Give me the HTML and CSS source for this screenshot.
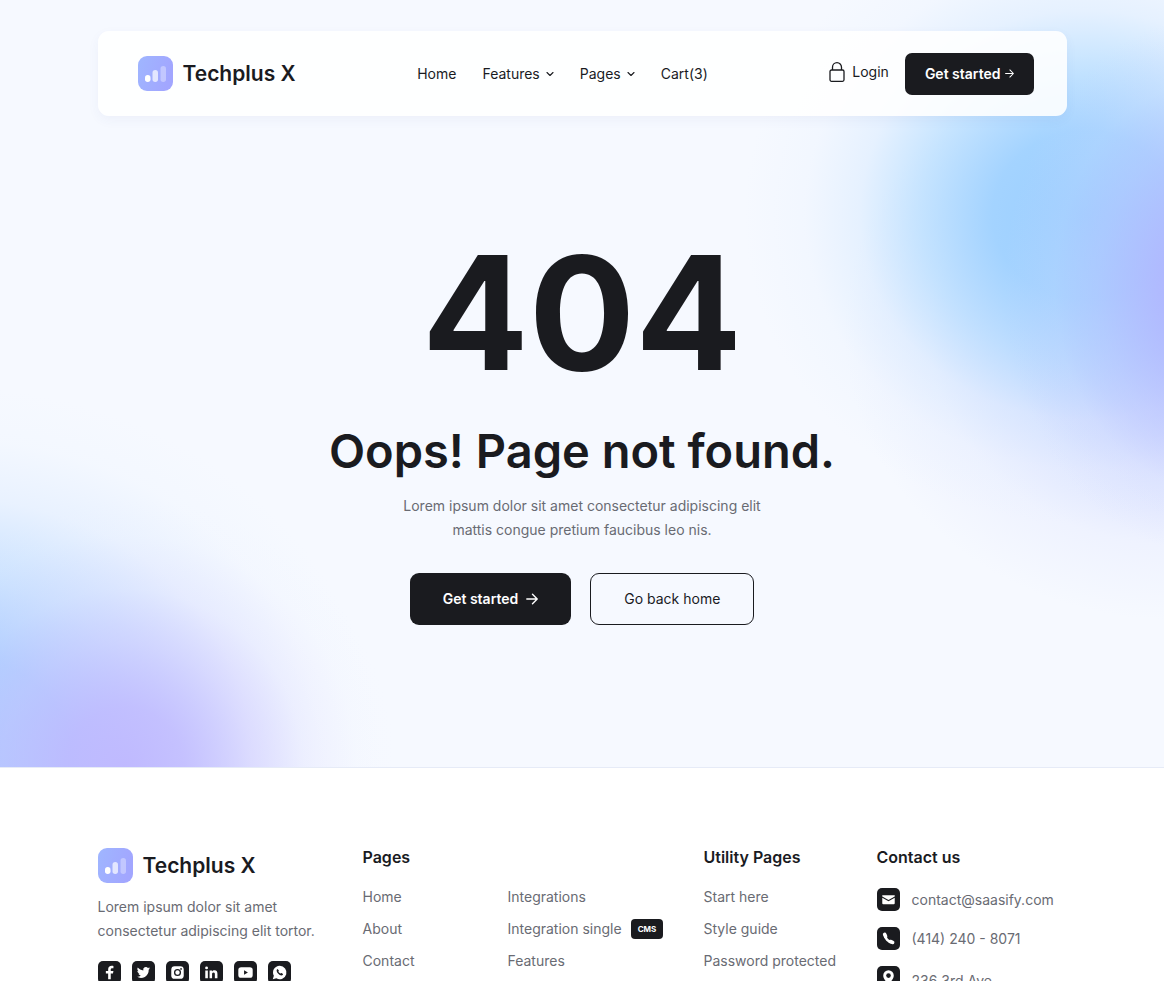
FILE: index.html
```
<!DOCTYPE html>
<html lang="en">
<head>
<meta charset="utf-8">
<meta name="viewport" content="width=device-width, initial-scale=1">
<title>Page not found – Techplus X</title>
<link rel="stylesheet" href="styles.css">
</head>
<body>
<svg class="sprite" aria-hidden="true">
  <defs>
    <linearGradient id="logo-fill" x1="0" y1="0" x2="1" y2="0.3">
      <stop offset="0" stop-color="#9fb6ff"/>
      <stop offset="1" stop-color="#a2a6ff"/>
    </linearGradient>
    <symbol id="logo" viewBox="0 0 35 35">
      <rect width="35" height="35" rx="9" fill="url(#logo-fill)"/>
      <rect x="7" y="19" width="5.500" height="7" rx="2.700" fill="#fff"/>
      <rect x="14.500" y="14" width="5.500" height="12" rx="2.700" fill="#fff" opacity=".7"/>
      <rect x="22.500" y="10" width="5.500" height="16" rx="2.700" fill="#fff" opacity=".35"/>
    </symbol>
    <symbol id="chevron" viewBox="0 0 8 8"><path d="M1 2.500l3 3 3-3" fill="none" stroke="currentColor" stroke-width="1.100" stroke-linecap="round" stroke-linejoin="round"/></symbol>
    <symbol id="arrow" viewBox="0 0 12 12"><path d="M.8 6h10.200M6.500 1.300L11.200 6l-4.700 4.700" fill="none" stroke="currentColor" stroke-width="1.400" stroke-linecap="round" stroke-linejoin="round"/></symbol>
  </defs>
</svg>

<div class="hero">
  <header class="header wrap">
    <a class="brand" href="#"><svg class="brand-mark" aria-hidden="true"><use href="#logo"/></svg>Techplus X</a>
    <nav class="nav" aria-label="Main">
      <a href="#">Home</a>
      <a href="#">Features<svg class="chevron" aria-hidden="true"><use href="#chevron"/></svg></a>
      <a href="#">Pages<svg class="chevron" aria-hidden="true"><use href="#chevron"/></svg></a>
      <a href="#">Cart(3)</a>
    </nav>
    <div class="actions">
      <a class="login" href="#">
        <svg class="lock" viewBox="0 0 16 20" fill="none" stroke="currentColor" stroke-width="1.300" aria-hidden="true"><rect x="1" y="8" width="14" height="11.300" rx="1.500"/><path d="M3.500 8V5.200a4.500 4.500 0 0 1 9 0V8"/></svg>
        Login
      </a>
      <a class="button button-dark button-small" href="#">Get started<svg class="arrow-small" aria-hidden="true"><use href="#arrow"/></svg></a>
    </div>
  </header>

  <main class="message wrap">
    <p class="code">404</p>
    <h1 class="title">Oops! Page not found.</h1>
    <p class="lead">Lorem ipsum dolor sit amet consectetur adipiscing elit mattis congue pretium faucibus leo nis.</p>
    <div class="buttons">
      <a class="button button-dark" href="#">Get started<svg class="arrow" aria-hidden="true"><use href="#arrow"/></svg></a>
      <a class="button button-outline" href="#">Go back home</a>
    </div>
  </main>
</div>

<footer class="footer">
  <div class="footer-grid wrap">
    <section class="about">
      <a class="brand" href="#"><svg class="brand-mark" aria-hidden="true"><use href="#logo"/></svg>Techplus X</a>
      <p class="about-text">Lorem ipsum dolor sit amet consectetur adipiscing elit tortor.</p>
      <div class="social">
        <a class="tile" href="#" aria-label="Facebook"><svg viewBox="0 0 24 24" aria-hidden="true"><path d="M13.300 19v-6h2.300l.5-2.600h-2.800V9c0-.9.4-1.500 1.500-1.500h1.300V5.200C15.700 5.100 15 5 14.300 5c-2.200 0-3.700 1.300-3.700 3.700v1.700H8.200V13h2.400v6z" fill="#fff"/></svg></a>
        <a class="tile" href="#" aria-label="Twitter"><svg viewBox="0 0 24 24" aria-hidden="true"><path d="M18.800 7.600c-.5.2-1 .4-1.600.5.600-.4 1-.9 1.200-1.600-.5.300-1.100.6-1.800.7a2.800 2.800 0 0 0-4.800 2.600C9.400 9.700 7.400 8.500 6 6.900c-.8 1.300-.4 2.900.8 3.700-.4 0-.9-.1-1.200-.3 0 1.300.9 2.500 2.200 2.800-.4.100-.8.100-1.200 0 .4 1.200 1.400 1.900 2.600 2A5.700 5.700 0 0 1 5 16.300a8 8 0 0 0 12.400-7.100c.6-.4 1-.9 1.400-1.600z" fill="#fff"/></svg></a>
        <a class="tile" href="#" aria-label="Instagram"><svg viewBox="0 0 24 24" aria-hidden="true"><rect x="5.500" y="5.500" width="13" height="13" rx="3.500" fill="#fff"/><circle cx="12" cy="12" r="3" fill="none" stroke="#1a1b1f" stroke-width="1.400"/><circle cx="15.700" cy="8.300" r=".9" fill="#1a1b1f"/></svg></a>
        <a class="tile" href="#" aria-label="LinkedIn"><svg viewBox="0 0 24 24" aria-hidden="true"><path d="M5.500 9.800h2.700V18H5.500zM10 9.800h2.600v1.100c.5-.8 1.300-1.300 2.500-1.300 2.500 0 3.100 1.600 3.100 3.900V18h-2.700v-4c0-1.100-.2-2.100-1.400-2.100-1.300 0-1.500 1-1.500 2.100v4H10z" fill="#fff"/><circle cx="6.850" cy="7.200" r="1.500" fill="#fff"/></svg></a>
        <a class="tile" href="#" aria-label="YouTube"><svg viewBox="0 0 24 24" aria-hidden="true"><rect x="4.500" y="6.500" width="15" height="11" rx="3" fill="#fff"/><path d="M10.500 9.600l4 2.400-4 2.400z" fill="#1a1b1f"/></svg></a>
        <a class="tile" href="#" aria-label="WhatsApp"><svg viewBox="0 0 24 24" aria-hidden="true"><path d="M12.200 5a7 7 0 0 0-6.100 10.400L5 19l3.700-1A7 7 0 1 0 12.200 5z" fill="#fff"/><path d="M10 8.300c-1.600.6-1.200 2.900.5 4.800s4.100 2.700 5 1.200c.3-.6.200-.9-.2-1.100l-1.200-.6c-.3-.2-.6 0-.9.500-.9-.3-2-1.200-2.400-2.200.5-.4.600-.7.500-1z" fill="#1a1b1f"/></svg></a>
      </div>
    </section>

    <section>
      <h2 class="footer-title">Pages</h2>
      <div class="page-links">
        <ul class="links">
          <li><a href="#">Home</a></li>
          <li><a href="#">About</a></li>
          <li><a href="#">Contact</a></li>
        </ul>
        <ul class="links">
          <li><a href="#">Integrations</a></li>
          <li><a href="#">Integration single</a><span class="tag">CMS</span></li>
          <li><a href="#">Features</a></li>
        </ul>
      </div>
    </section>

    <section>
      <h2 class="footer-title">Utility Pages</h2>
      <ul class="links">
        <li><a href="#">Start here</a></li>
        <li><a href="#">Style guide</a></li>
        <li><a href="#">Password protected</a></li>
      </ul>
    </section>

    <section>
      <h2 class="footer-title">Contact us</h2>
      <ul class="contacts">
        <li><span class="tile"><svg viewBox="0 0 24 24" aria-hidden="true"><path d="M5.500 7.500h13v1.300L12 12.600 5.500 8.800z" fill="#fff"/><path d="M5.500 10.200l6.500 3.700 6.500-3.700V16a1 1 0 0 1-1 1h-11a1 1 0 0 1-1-1z" fill="#fff"/></svg></span><a href="#">contact@saasify.com</a></li>
        <li><span class="tile"><svg viewBox="0 0 24 24" aria-hidden="true"><path d="M8.200 7.700c.2 4.300 3.600 8 8 8.600" fill="none" stroke="#fff" stroke-width="2.600" stroke-linecap="round"/><path d="M8 7.700l.9 2.100M14 15.200l2.300.9" fill="none" stroke="#fff" stroke-width="3.800" stroke-linecap="round"/></svg></span><a href="#">(414) 240 - 8071</a></li>
        <li class="address"><span class="tile"><svg viewBox="0 0 24 24" aria-hidden="true"><path d="M12 4.500a5.500 5.500 0 0 0-5.500 5.500c0 3.600 3.200 6.500 5.500 9 2.300-2.500 5.500-5.400 5.500-9A5.500 5.500 0 0 0 12 4.500z" fill="#fff"/><circle cx="12" cy="10" r="2.400" fill="#1a1b1f"/></svg></span><span class="address-text">236 3rd Ave</span></li>
      </ul>
    </section>
  </div>
</footer>
</body>
</html>
```
FILE: styles.css
```
* {
  box-sizing: border-box;
}

body {
  margin: 0;
  background: #fff;
  color: #1a1b1f;
  font-family: Inter, "Liberation Sans", sans-serif;
  font-size: 14px;
  line-height: 24px;
}

a {
  color: inherit;
  text-decoration: none;
}

h1, h2, p, ul {
  margin: 0;
  padding: 0;
}

ul {
  list-style: none;
}

svg {
  display: block;
  flex: none;
}

.sprite {
  position: absolute;
  width: 0;
  height: 0;
}

.wrap {
  width: calc(100% - 195px);
  max-width: 1200px;
  margin: 0 auto;
}

/* Hero */

.hero {
  padding: 31px 0 142px;
  border-bottom: 1px solid #e6ebf7;
  background:
    radial-gradient(ellipse 270px 270px at 125px 100%, rgba(192, 182, 255, .9) 0%, rgba(194, 184, 255, .8) 22%, rgba(206, 196, 255, .5) 46%, rgba(222, 216, 255, .25) 66%, rgba(238, 238, 255, .08) 86%, rgba(240, 244, 255, 0) 100%),
    radial-gradient(ellipse 430px 370px at -50px calc(100% - 10px), #a0c4ff 0%, rgba(160, 202, 255, .95) 28%, rgba(175, 212, 255, .65) 48%, rgba(208, 228, 255, .35) 70%, rgba(228, 240, 255, .14) 86%, rgba(235, 245, 255, 0) 100%),
    radial-gradient(ellipse 210px 270px at calc(100% + 50px) 285px, #b2b0ff 0%, rgba(178, 182, 255, .85) 25%, rgba(188, 194, 255, .45) 55%, rgba(208, 214, 255, .2) 76%, rgba(235, 240, 255, 0) 100%),
    radial-gradient(ellipse 340px 310px at calc(100% - 80px) 215px, rgba(154, 206, 255, 1) 0%, rgba(158, 209, 255, .93) 27%, rgba(172, 217, 255, .65) 48%, rgba(205, 229, 255, .4) 66%, rgba(225, 238, 255, .2) 82%, rgba(240, 247, 255, 0) 100%),
    radial-gradient(ellipse 330px 290px at calc(100% + 10px) 330px, rgba(184, 192, 255, 1) 0%, rgba(190, 200, 255, .85) 30%, rgba(205, 214, 255, .55) 52%, rgba(220, 226, 255, .28) 74%, rgba(235, 240, 255, 0) 100%),
    #f6f9ff;
}

.header {
  display: flex;
  align-items: center;
  justify-content: space-between;
  min-height: 85px;
  padding: 20px 32px 20px 40px;
  border-radius: 11px;
  background: rgba(255, 255, 255, .88);
  box-shadow: 0 4px 12px rgba(60, 80, 160, .05);
}

.brand {
  display: flex;
  align-items: center;
  gap: 10px;
  font-size: 21px;
  font-weight: 600;
}

.brand-mark {
  width: 35px;
  height: 35px;
}

.nav {
  display: flex;
  gap: 26px;
}

.nav a {
  display: flex;
  align-items: center;
  gap: 6px;
}

.chevron {
  width: 8px;
  height: 8px;
}

.actions {
  display: flex;
  align-items: center;
  gap: 16px;
}

.login {
  display: flex;
  align-items: center;
  gap: 7px;
  padding-bottom: 4px;
}

.lock {
  width: 16px;
  height: 20px;
}

.button {
  display: flex;
  align-items: center;
  justify-content: center;
  gap: 8px;
  min-height: 52px;
  padding: 0 33px;
  border-radius: 9px;
  white-space: nowrap;
}

.button-dark {
  background: #1a1b1f;
  color: #fff;
  font-weight: 600;
}

.button-small {
  gap: 5px;
  min-height: 42px;
  padding: 0 20px;
  border-radius: 7px;
}

.button-outline {
  border: 1px solid #1a1b1f;
}

.arrow {
  width: 12px;
  height: 12px;
}

.arrow-small {
  width: 9px;
  height: 9px;
}

.message {
  display: flex;
  flex-direction: column;
  align-items: center;
  padding-top: 117px;
  text-align: center;
}

.code {
  font-size: 158px;
  font-weight: 700;
  line-height: 160px;
}

.title {
  margin-top: 28px;
  font-size: 47px;
  font-weight: 600;
  line-height: 60px;
}

.lead {
  max-width: 390px;
  margin-top: 13px;
  color: #696b73;
}

.buttons {
  display: flex;
  gap: 19px;
  margin-top: 31px;
}

/* Footer */

.footer {
  padding: 80px 0;
  color: #696b73;
}

.footer-grid {
  display: grid;
  grid-template-columns: 265fr 341fr 173fr 190fr;
}

.footer .brand {
  color: #1a1b1f;
}

.about-text {
  max-width: 232px;
  margin-top: 12px;
}

.social {
  display: flex;
  gap: 11px;
  margin-top: 18px;
}

.tile {
  flex: none;
  width: 23px;
  height: 23px;
  border-radius: 5px;
  background: #1a1b1f;
}

.footer-title {
  color: #1a1b1f;
  font-size: 16px;
  font-weight: 600;
  line-height: 18px;
}

.page-links {
  display: grid;
  grid-template-columns: 145fr 196fr;
}

.links {
  display: grid;
  gap: 8px;
  margin-top: 19px;
}

.links li {
  display: flex;
  align-items: center;
  gap: 9px;
  white-space: nowrap;
}

.tag {
  padding: 0 7px;
  border-radius: 4px;
  background: #1a1b1f;
  color: #fff;
  font-size: 8px;
  font-weight: 700;
  line-height: 20px;
}

.contacts {
  display: grid;
  gap: 16px;
  margin-top: 22px;
}

.contacts li {
  display: flex;
  align-items: center;
  gap: 12px;
  line-height: 22px;
}

.contacts .address {
  align-items: flex-start;
}

.address-text {
  padding-top: 4px;
}
```
